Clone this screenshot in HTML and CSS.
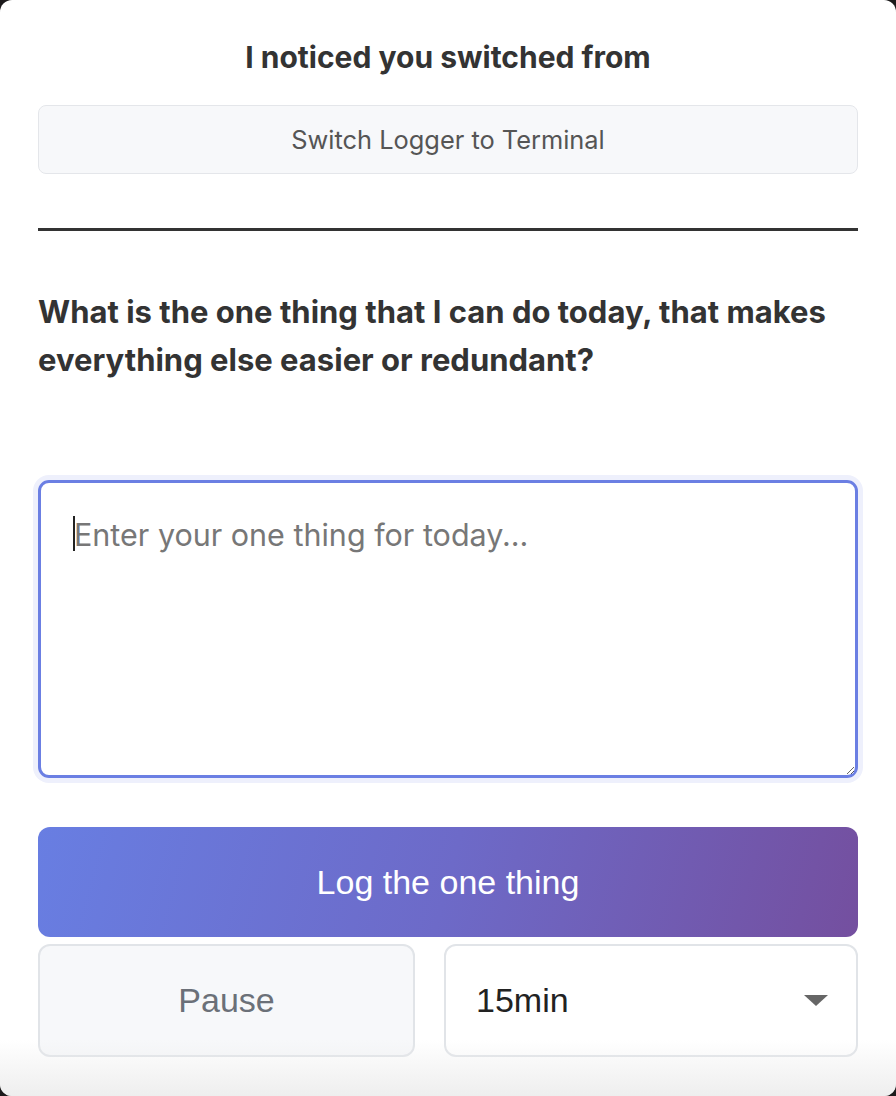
FILE: index.html
```html
<!DOCTYPE html>
<html lang="en">
<head>
<meta charset="utf-8">
<title>One thing</title>
<link rel="stylesheet" href="styles.css">
</head>
<body>
<div class="window">
  <main class="panel">
    <h1 class="title">I noticed you switched from</h1>
    <div class="switch-box">Switch Logger to Terminal</div>
    <hr class="rule">
    <p class="question">What is the one thing that I can do today, that makes everything else easier or redundant?</p>
    <div class="input-wrap">
      <textarea class="entry" placeholder="Enter your one thing for today..."></textarea>
      <span class="caret"></span>
    </div>
    <button class="log-btn" type="button">Log the one thing</button>
    <div class="controls">
      <button class="pause-btn" type="button">Pause</button>
      <div class="select">
        <span class="select-value">15min</span>
        <svg class="select-arrow" width="24" height="12" viewBox="0 0 24 12"><path d="M0 0 L24 0 L12 11 Z" fill="#666"/></svg>
      </div>
    </div>
  </main>
  <div class="bottom-fade"></div>
</div>
</body>
</html>
```

FILE: styles.css
```css
html, body {
  margin: 0;
  padding: 0;
  background: #1c1a1b;
}

body {
  width: 896px;
  height: 1096px;
  overflow: hidden;
}

.window {
  position: relative;
  width: 896px;
  height: 1096px;
  background: #ffffff;
  border-radius: 12px;
  overflow: hidden;
  font-family: Inter, "Noto Sans", sans-serif;
  color: #333333;
}

.panel {
  padding: 37px 38px 0 38px;
  display: flex;
  flex-direction: column;
}

.title {
  margin: 0;
  text-align: center;
  font-size: 30px;
  line-height: 40px;
  font-weight: 700;
  color: #333333;
}

.switch-box {
  margin-top: 28px;
  height: 69px;
  box-sizing: border-box;
  border: 1px solid #e4e6ea;
  border-radius: 8px;
  background: #f7f8fa;
  display: flex;
  align-items: center;
  justify-content: center;
  font-size: 25.4px;
  color: #555555;
}

.rule {
  margin: 54px 0 0 0;
  border: 0;
  height: 3px;
  background: #333333;
}

.question {
  margin: 57px 0 0 0;
  font-size: 31px;
  line-height: 48px;
  font-weight: 700;
  color: #333333;
}

.input-wrap {
  position: relative;
  margin-top: 96px;
  height: 298px;
  border-radius: 11px;
  box-shadow: 0 0 0 5px #eef0fc;
}

.entry {
  display: block;
  width: 100%;
  height: 100%;
  box-sizing: border-box;
  border: 3px solid #6b7fe3;
  border-radius: 11px;
  padding: 33px 33px;
  font-family: Inter, "Noto Sans", sans-serif;
  font-size: 30.5px;
  line-height: 38px;
  color: #333333;
  background: #ffffff;
  outline: none;
  resize: both;
}

.entry::placeholder {
  color: #777777;
}

.caret {
  position: absolute;
  left: 35px;
  top: 36px;
  width: 2px;
  height: 35px;
  background: #222222;
}

.log-btn {
  margin-top: 49px;
  height: 110px;
  border: 0;
  border-radius: 12px;
  background: linear-gradient(105deg, #687ee2 0%, #6d6ac8 50%, #744f9f 100%);
  color: #ffffff;
  font-family: "Liberation Sans", Arial, sans-serif;
  font-size: 34px;
}

.controls {
  margin-top: 7px;
  display: grid;
  grid-template-columns: 377px 414px;
  column-gap: 29px;
}

.pause-btn {
  height: 113px;
  box-sizing: border-box;
  border: 2px solid #e1e4e8;
  border-radius: 12px;
  background: #f7f8fa;
  color: #6b7078;
  font-family: "Liberation Sans", Arial, sans-serif;
  font-size: 34px;
}

.select {
  height: 113px;
  box-sizing: border-box;
  border: 2px solid #e1e4e8;
  border-radius: 12px;
  background: #ffffff;
  display: flex;
  align-items: center;
  justify-content: space-between;
  padding: 0 28px 0 30px;
}

.select-value {
  font-family: "Liberation Sans", Arial, sans-serif;
  font-size: 34px;
  color: #222222;
}

.select-arrow {
  display: block;
}

.bottom-fade {
  position: absolute;
  left: 0;
  right: 0;
  bottom: 0;
  height: 56px;
  background: linear-gradient(to bottom, rgba(235, 235, 235, 0) 0%, rgba(235, 235, 235, 0.85) 100%);
  pointer-events: none;
}
```
